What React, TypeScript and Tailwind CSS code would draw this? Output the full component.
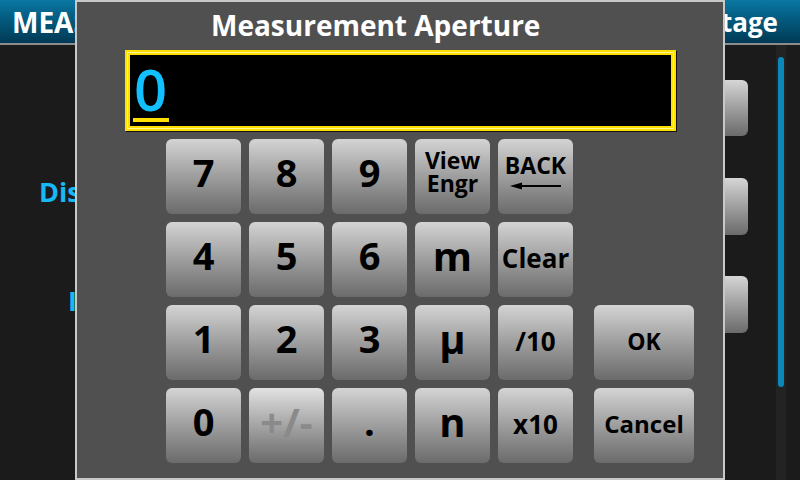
import React from "react";

const F = { fontFamily: '"Open Sans", "DejaVu Sans", sans-serif' };

function Key({
  children,
  className = "",
}: {
  children?: React.ReactNode;
  className?: string;
}) {
  return (
    <div
      className={
        "flex items-center justify-center rounded-[6px] bg-linear-to-b to-[#6b6b6b] font-bold text-black leading-none " +
        className
      }
    >
      {children}
    </div>
  );
}

const D = "from-[#d4d4d4] text-[38px] pb-[9px]";
const L = "from-[#d4d4d4] text-[40px] pb-[8px]";
const S = "from-[#d4d4d4] pb-[3px]";

export default function App() {
  return (
    <div
      className="relative w-[800px] h-[480px] overflow-hidden bg-[#1b1b1b] flex flex-col"
      style={F}
    >
      {/* Header */}
      <div className="h-[45px] shrink-0 flex items-center justify-between pl-[12px] pr-[22px] bg-linear-to-b from-[#0a77a3] to-[#003a55] border-b-2 border-[#8c8c8c]">
        <span className="text-white font-bold text-[28px] leading-none">MEASURE SETTINGS</span>
        <span className="text-white font-bold text-[26px] leading-none">Voltage</span>
      </div>

      {/* Body */}
      <div className="flex-1 flex">
        <div className="flex-1 flex flex-col">
          <div className="pl-[39px] pt-[133px] text-[#16b9f5] font-bold text-[27px] leading-none">
            Display Digits
          </div>
          <div className="pl-[68px] pt-[82px] text-[#16b9f5] font-bold text-[27px] leading-none">
            Integration
          </div>
        </div>
        <div className="w-[108px] mr-[28px] flex flex-col pt-[35px]">
          <div className="h-[56px] rounded-[6px] bg-linear-to-b from-[#d6d6d6] to-[#6b6b6b]" />
          <div className="h-[57px] mt-[42px] rounded-[6px] bg-linear-to-b from-[#d6d6d6] to-[#6b6b6b]" />
          <div className="h-[57px] mt-[41px] rounded-[6px] bg-linear-to-b from-[#d6d6d6] to-[#6b6b6b]" />
        </div>
        <div className="w-[10px] bg-[#232323] pt-[12px] px-[2px]">
          <div className="h-[330px] w-[6px] rounded-[3px] bg-[#0a88b8]" />
        </div>
        <div className="w-[14px]" />
      </div>

      {/* Dialog */}
      <div className="absolute left-[75px] top-0 w-[650px] h-[480px] border-2 border-[#c8c8c8] bg-[#505050] flex flex-col">
        <div className="h-[46px] pl-[134px] flex items-center">
          <span className="text-white font-bold text-[28px] leading-none">Measurement Aperture</span>
        </div>
        <div className="ml-[48px] mt-[2px] w-[551px] h-[81px] bg-[#ffe000] p-[2px] shadow-[1px_1px_0_#111]">
          <div className="w-full h-full bg-[#fff59a] p-[1px]">
            <div className="w-full h-full bg-[#ffe000] p-[2px]">
              <div className="w-full h-full bg-black relative pl-[4px] pt-[5px]">
                <span className="text-[#12c0ff] text-[58px] leading-none font-semibold">0</span>
                <div className="absolute left-[3px] top-[63px] w-[36px] h-[4px] bg-[#ffe000]" />
              </div>
            </div>
          </div>
        </div>

        <div className="ml-[89px] mt-[8px] grid grid-cols-[75px_75px_75px_75px_75px_5px_100px] grid-rows-[75px_75px_75px_75px] gap-[8px]">
          <Key className={D}>7</Key>
          <Key className={D}>8</Key>
          <Key className={D}>9</Key>
          <Key className={S + " text-[23px] flex-col leading-[27px] pb-[10px]"}>
            <span>View</span>
            <span>Engr</span>
          </Key>
          <Key className={S + " flex-col text-[23px]"}>
            <span className="-mt-[6px]">BACK</span>
            <svg width="54" height="10" viewBox="0 0 54 10" className="mt-[4px]">
              <path d="M1 5 L13 1.5 L13 8.5 Z" fill="#000" />
              <rect x="10" y="4" width="42" height="2" fill="#000" />
            </svg>
          </Key>
          <div />
          <div />

          <Key className={D}>4</Key>
          <Key className={D}>5</Key>
          <Key className={D}>6</Key>
          <Key className={L}>m</Key>
          <Key className={S + " text-[26px]"}>Clear</Key>
          <div />
          <div />

          <Key className={D}>1</Key>
          <Key className={D}>2</Key>
          <Key className={D}>3</Key>
          <Key className={L}>μ</Key>
          <Key className={S + " text-[26px]"}>/10</Key>
          <div />
          <Key className={S + " text-[23px]"}>OK</Key>

          <Key className={D}>0</Key>
          <Key className="from-[#e2e2e2] text-[40px] pb-[8px]">
            <span className="text-[#8a8a8a]">+/-</span>
          </Key>
          <Key className={D}>.</Key>
          <Key className={L}>n</Key>
          <Key className={S + " text-[26px]"}>x10</Key>
          <div />
          <Key className={S + " text-[24px]"}>Cancel</Key>
        </div>
      </div>
    </div>
  );
}
